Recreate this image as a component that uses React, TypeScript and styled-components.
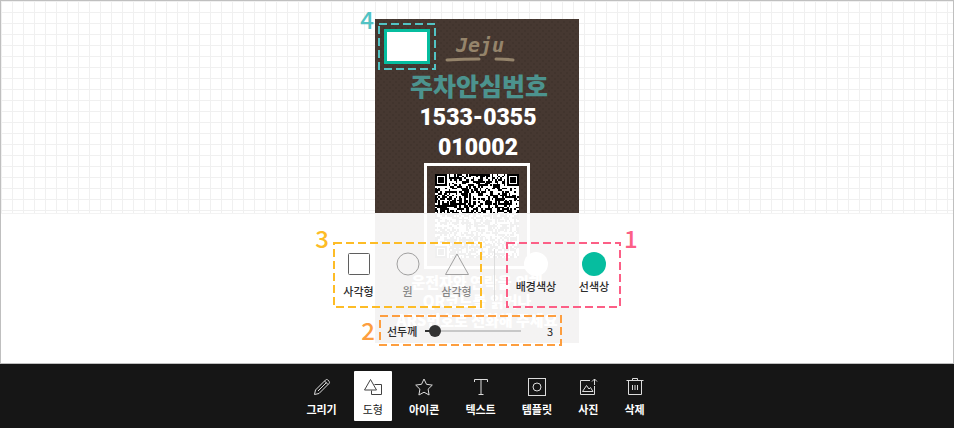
import React, { useState } from "react";
import styled, { createGlobalStyle, css } from "styled-components";

const GlobalStyle = createGlobalStyle`
  *, *::before, *::after { box-sizing: border-box; }
  body {
    margin: 0;
    background: #161616;
    font-family: "Noto Sans CJK KR", "Noto Sans", sans-serif;
  }
`;

const Page = styled.div`
  display: flex;
  flex-direction: column;
  min-height: 100vh;
  background: #161616;
`;

const Stage = styled.main`
  position: relative;
  display: flex;
  justify-content: center;
  padding: 18px 0 20px;
  border: 1px solid #bfbfbf;
  background-color: #fff;
  background-image:
    linear-gradient(to right, #f0f0f0 1px, transparent 1px),
    linear-gradient(to bottom, #f0f0f0 1px, transparent 1px);
  background-size: 11px 11px;
`;

const Poster = styled.section`
  position: relative;
  display: flex;
  flex-direction: column;
  align-items: center;
  width: 204px;
  padding: 14px 0;
  color: #fff;
  background-color: #463831;
  background-image: radial-gradient(#41342d 1px, transparent 1px), radial-gradient(#41342d 1px, transparent 1px);
  background-size: 6px 6px;
  background-position: 0 0, 3px 3px;
`;

const Brand = styled.div`
  display: flex;
  flex-direction: column;
  align-items: center;
  margin-left: 6px;
  color: #95846b;
  font: italic 700 20px/24px "DejaVu Sans Mono", monospace;
`;

const PosterTitle = styled.h1`
  margin: 5px 0 0 4px;
  font-size: 25px;
  font-weight: 900;
  line-height: 36px;
  color: #4c938e;
`;

const PosterNumber = styled.p`
  margin: 0 0 0 2px;
  font: 900 23px/30px "Roboto", sans-serif;
`;

const QrFrame = styled.div`
  display: flex;
  padding: 8px;
  border: 3px solid #fff;
`;

const PosterNote = styled.p`
  margin: 3px 0 0;
  font-size: 15px;
  font-weight: 900;
  line-height: 19px;
  text-align: center;
  white-space: nowrap;
`;

const DrawnShape = styled.div`
  position: absolute;
  top: 4px;
  left: 3px;
  padding: 6px;
`;

const DrawnRect = styled.div`
  width: 46px;
  height: 35px;
  border: 3px solid #06bd9f;
  background: #fff;
`;

const Panel = styled.section`
  position: absolute;
  right: 0;
  bottom: 0;
  left: 0;
  display: flex;
  flex-direction: column;
  align-items: center;
  gap: 7px;
  padding: 28px 0 17px;
  border-top: 1px solid #f3f3f3;
  background: rgba(255, 255, 255, 0.94);
`;

const PanelRow = styled.div`
  display: flex;
  align-items: center;
  gap: 12px;
`;

const Divider = styled.span`
  width: 1px;
  height: 52px;
  margin-right: -1px;
  background: #ddd;
`;

const Group = styled.div`
  position: relative;
  display: flex;
  height: 66px;
`;

const ShapeGroup = styled(Group)`
  width: 149px;
  padding: 10px 1px 0;
`;

const ColorGroup = styled(Group)`
  width: 115px;
  padding: 10px 0 0 1px;
`;

const SliderGroup = styled(Group)`
  align-items: center;
  width: 183px;
  height: 31px;
  margin-right: 13px;
  padding: 0 9px 0 8px;
`;

const Option = styled.button<{ $wide?: boolean; $muted?: boolean }>`
  display: flex;
  flex: none;
  flex-direction: column;
  align-items: center;
  gap: ${(p) => (p.$wide ? 2 : 7)}px;
  width: ${(p) => (p.$wide ? 58 : 49)}px;
  height: 48px;
  padding: 0;
  border: 0;
  background: none;
  font: 500 11px/16px "Noto Sans CJK KR", sans-serif;
  white-space: nowrap;
  color: #2c2c2c;
  opacity: ${(p) => (p.$muted ? 0.55 : 1)};
  cursor: pointer;
`;

const Swatch = styled.span<{ $color: string }>`
  width: 24px;
  height: 24px;
  border-radius: 50%;
  background: ${(p) => p.$color};
`;

const SliderLabel = styled.label`
  flex: none;
  margin-right: 8px;
  font-size: 11px;
  font-weight: 500;
  line-height: 16px;
  color: #2c2c2c;
`;

const Range = styled.input`
  appearance: none;
  width: 96px;
  height: 12px;
  margin: 0;
  background: linear-gradient(#333, #333) 0 5px / 6px 2px no-repeat,
    linear-gradient(#c8c8c8, #c8c8c8) 0 5px / 100% 2px no-repeat;
  &::-webkit-slider-thumb {
    appearance: none;
    width: 12px;
    height: 12px;
    border-radius: 50%;
    background: #333;
  }
`;

const SliderValue = styled.output`
  margin-left: auto;
  font-size: 11px;
  line-height: 16px;
  color: #222;
`;

const Frame = styled.svg`
  position: absolute;
  inset: 0;
  width: 100%;
  height: 100%;
  overflow: visible;
  pointer-events: none;
`;

const FrameLine = styled.rect`
  width: calc(100% - 2px);
  height: calc(100% - 2px);
  fill: none;
  stroke-width: 2px;
  stroke-dasharray: 8 4;
`;

const Marker = styled.span<{ $color: string; $after?: boolean }>`
  position: absolute;
  top: -16px;
  ${(p) => (p.$after ? css`left: 100%; margin-left: 3px;` : css`right: 100%; margin-right: 4px;`)}
  font-size: 24px;
  font-weight: 500;
  line-height: 24px;
  color: ${(p) => p.$color};
`;

const SliderMarker = styled(Marker)`
  top: 3px;
`;

const Toolbar = styled.nav`
  display: flex;
  justify-content: center;
  gap: 8px;
  padding: 7px 3px 7px 0;
  background: #161616;
`;

const Icon = styled.svg`
  display: block;
  width: 20px;
  height: 20px;
  fill: none;
  stroke: currentColor;
  stroke-width: 1px;
  opacity: 0.85;
`;

const ShapeIcon = styled(Icon)`
  width: 24px;
  height: 24px;
  stroke: #444;
`;

const Tool = styled.button<{ $active?: boolean }>`
  display: flex;
  flex-direction: column;
  align-items: center;
  gap: 4px;
  height: 50px;
  padding: 6px 9px 0;
  border: 0;
  border-radius: 1px;
  font: ${(p) => (p.$active ? 400 : 700)} 11px/16px "Noto Sans CJK KR", sans-serif;
  color: ${(p) => (p.$active ? "#222" : "#fff")};
  background: ${(p) => (p.$active ? "#fff" : "transparent")};
  cursor: pointer;
`;

function DashedFrame({ color }: { color: string }) {
  return (
    <Frame aria-hidden="true">
      <FrameLine x="1" y="1" stroke={color} />
    </Frame>
  );
}

const QR_SIZE = 49;

function finderCell(x: number, y: number): boolean | null {
  const corners = [[0, 0], [QR_SIZE - 7, 0], [0, QR_SIZE - 7]];
  for (const [cx, cy] of corners) {
    const dx = x - cx;
    const dy = y - cy;
    if (dx >= -1 && dx <= 7 && dy >= -1 && dy <= 7) {
      const ring = Math.max(Math.abs(dx - 3), Math.abs(dy - 3));
      return ring === 3 || ring <= 1;
    }
  }
  return null;
}

function qrPath() {
  let seed = 1533;
  let d = "";
  for (let y = 0; y < QR_SIZE; y++) {
    for (let x = 0; x < QR_SIZE; x++) {
      seed = (seed * 1103515245 + 12345) % 2147483648;
      const finder = finderCell(x, y);
      if (finder ?? seed / 2147483648 > 0.48) d += `M${x} ${y}h1v1h-1z`;
    }
  }
  return d;
}

const QR_PATH = qrPath();

const TOOLS = [
  { label: "그리기", icon: <path d="M2.5 17.5l1-4.5L13.5 3c.7-.7 1.6-.7 2.3 0l1.2 1.2c.7.7.7 1.6 0 2.3L7 16.5zM12.5 4l3.500 3.500M14.5 5.5L6 14" /> },
  { label: "도형", icon: <path d="M7.5 2.5l6 10.500h-12zM11.5 7.5h7v10h-10v-4" /> },
  { label: "아이콘", icon: <path d="M10 2l2.5 5.3 5.8.8-4.2 4.1 1 5.8-5.1-2.8L4.9 18l1-5.8L1.7 8.1l5.8-.8z" /> },
  { label: "텍스트", icon: <path d="M3.5 5V2.5h13V5M10 2.5v15M7.5 17.5h5" /> },
  { label: "템플릿", icon: <><rect x="1.5" y="1.5" width="17" height="17" /><circle cx="10" cy="10" r="4" /></> },
  { label: "사진", icon: <path d="M12 3.5H2.5v14h14V9M4.500 14.5l4-6 2.5 3.5 1.5-1.5 2.5 4zM16.5 8V2M14 4.5L16.5 2 19 4.5" /> },
  { label: "삭제", icon: <path d="M1.5 3.5h17M7.5 3V1.5h5V3M3.5 3.5v14h13v-14M7.5 8v5M10 8v5M12.5 8v5" /> },
];

export default function App() {
  const [tool, setTool] = useState("도형");
  const [width, setWidth] = useState(3);

  return (
    <Page>
      <GlobalStyle />
      <Stage>
        <Poster>
          <DrawnShape>
            <DrawnRect />
            <DashedFrame color="#52c3c4" />
            <Marker $color="#52c3c4">4</Marker>
          </DrawnShape>
          <Brand>
            Jeju
            <svg width="70" height="5" viewBox="0 0 70 5" fill="none" stroke="currentColor" strokeWidth="3" strokeLinecap="round">
              <path d="M2 3q16-1 32-1M51 2q10 0 17 1" />
            </svg>
          </Brand>
          <PosterTitle>주차안심번호</PosterTitle>
          <PosterNumber>1533-0355</PosterNumber>
          <PosterNumber>010002</PosterNumber>
          <QrFrame>
            <svg width="84" height="84" viewBox="0 0 49 49" shapeRendering="crispEdges" role="img" aria-label="QR">
              <rect width="49" height="49" fill="#fff" />
              <path d={QR_PATH} fill="#000" />
            </svg>
          </QrFrame>
          <PosterNote>
            운전자와 연락을 위해<br />QR코드를 읽거나<br />ARS번호로 전화해 주세요
          </PosterNote>
        </Poster>
        <Panel>
          <PanelRow>
            <ShapeGroup>
              <DashedFrame color="#fdbc26" />
              <Marker $color="#fdbc26">3</Marker>
              <Option>
                <ShapeIcon viewBox="0 0 24 24"><rect x="1.5" y="1.5" width="21" height="21" rx="1" /></ShapeIcon>
                사각형
              </Option>
              <Option $muted>
                <ShapeIcon viewBox="0 0 24 24"><circle cx="12" cy="12" r="11" /></ShapeIcon>
                원
              </Option>
              <Option $muted>
                <ShapeIcon viewBox="0 0 24 24"><path d="M12 2L23.5 22.5H.5z" /></ShapeIcon>
                삼각형
              </Option>
            </ShapeGroup>
            <Divider />
            <ColorGroup>
              <DashedFrame color="#fc5f86" />
              <Marker $color="#fc5f86" $after>1</Marker>
              <Option $wide><Swatch $color="#fff" />배경색상</Option>
              <Option $wide><Swatch $color="#06bd9f" />선색상</Option>
            </ColorGroup>
          </PanelRow>
          <SliderGroup>
            <DashedFrame color="#fd9e3f" />
            <SliderMarker $color="#fd9e3f">2</SliderMarker>
            <SliderLabel htmlFor="stroke-width">선두께</SliderLabel>
            <Range id="stroke-width" type="range" min={1} max={50} value={width} onChange={(e) => setWidth(Number(e.target.value))} />
            <SliderValue htmlFor="stroke-width">{width}</SliderValue>
          </SliderGroup>
        </Panel>
      </Stage>
      <Toolbar>
        {TOOLS.map(({ label, icon }) => (
          <Tool key={label} $active={tool === label} onClick={() => setTool(label)}>
            <Icon viewBox="0 0 20 20">{icon}</Icon>
            {label}
          </Tool>
        ))}
      </Toolbar>
    </Page>
  );
}
